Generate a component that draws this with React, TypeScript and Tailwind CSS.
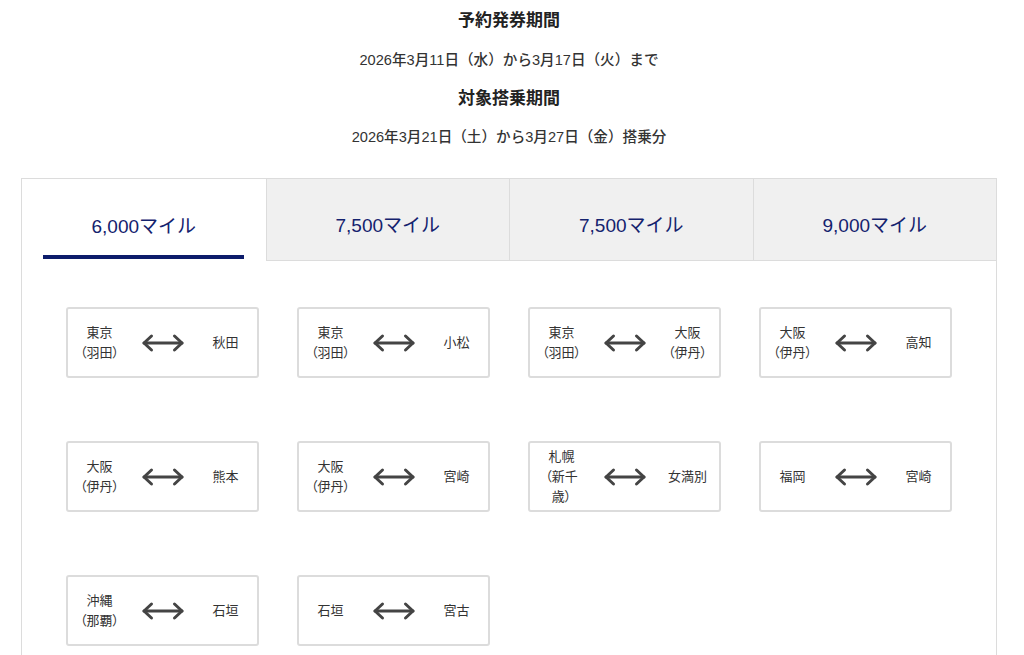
import { memo } from 'react';

interface Route {
  from: string;
  to: string;
}

const TABS = ['6,000マイル', '7,500マイル', '7,500マイル', '9,000マイル'];

const ROUTES: Route[] = [
  { from: '東京（羽田）', to: '秋田' },
  { from: '東京（羽田）', to: '小松' },
  { from: '東京（羽田）', to: '大阪（伊丹）' },
  { from: '大阪（伊丹）', to: '高知' },
  { from: '大阪（伊丹）', to: '熊本' },
  { from: '大阪（伊丹）', to: '宮崎' },
  { from: '札幌（新千歳）', to: '女満別' },
  { from: '福岡', to: '宮崎' },
  { from: '沖縄（那覇）', to: '石垣' },
  { from: '石垣', to: '宮古' },
];

const Arrow = () => (
  <svg width="44" height="20" viewBox="0 0 44 20" fill="none" stroke="#444" strokeWidth="3" strokeLinecap="round" strokeLinejoin="round">
    <path d="M3 10 H41" />
    <path d="M10.5 3 L3 10 L10.5 17" />
    <path d="M33.5 3 L41 10 L33.5 17" />
  </svg>
);

const RouteCard = memo(function RouteCard({ from, to }: Route) {
  return (
    <div className="h-[71px] border-2 border-[#dcdcdc] rounded-[3px] grid grid-cols-3 items-center text-[13px] leading-[20px] text-[#333] [font-feature-settings:'palt']">
      <div className="px-[11px] text-center">{from}</div>
      <div className="flex justify-center">
        <Arrow />
      </div>
      <div className="px-[11px] text-center">{to}</div>
    </div>
  );
});

export default function App() {
  return (
    <div className="bg-white min-h-[655px] pt-[8px] font-['Liberation_Sans','Noto_Sans_CJK_JP',sans-serif] text-[#333]">
      {/* Period info */}
      <div className="w-[1018px] text-center">
        <p className="text-[17px] leading-[26px] font-bold text-[#222]">予約発券期間</p>
        <p className="mt-[15px] text-[14.6px] leading-[22px] font-medium">2026年3月11日（水）から3月17日（火）まで</p>
        <p className="mt-[15px] text-[17px] leading-[26px] font-bold text-[#222]">対象搭乗期間</p>
        <p className="mt-[14px] text-[14.6px] leading-[22px] font-medium">2026年3月21日（土）から3月27日（金）搭乗分</p>
      </div>

      {/* Tab panel */}
      <div className="mt-[30px] ml-[21px] w-[976px] border border-[#dcdcdc] border-b-0 pb-[40px]">
        <div className="grid grid-cols-4 h-[82px]">
          {TABS.map((t, i) =>
            i === 0 ? (
              <div key={i} className="relative flex items-center justify-center bg-white">
                <span className="text-[19px] text-[#14226e] mt-[14px]">{t}</span>
                <span className="absolute left-[21px] right-[22px] bottom-[2px] h-[4px] bg-[#0d1c6b]" />
              </div>
            ) : (
              <div key={i} className="flex items-center justify-center bg-[#f0f0f0] border-l border-b border-[#dcdcdc]">
                <span className="text-[19px] text-[#14226e] mt-[14px]">{t}</span>
              </div>
            )
          )}
        </div>

        <div className="px-[44px] pt-[46px] grid grid-cols-[repeat(4,193px)] justify-between gap-y-[63px]">
          {ROUTES.map((r, i) => (
            <RouteCard key={i} from={r.from} to={r.to} />
          ))}
        </div>
      </div>
    </div>
  );
}
